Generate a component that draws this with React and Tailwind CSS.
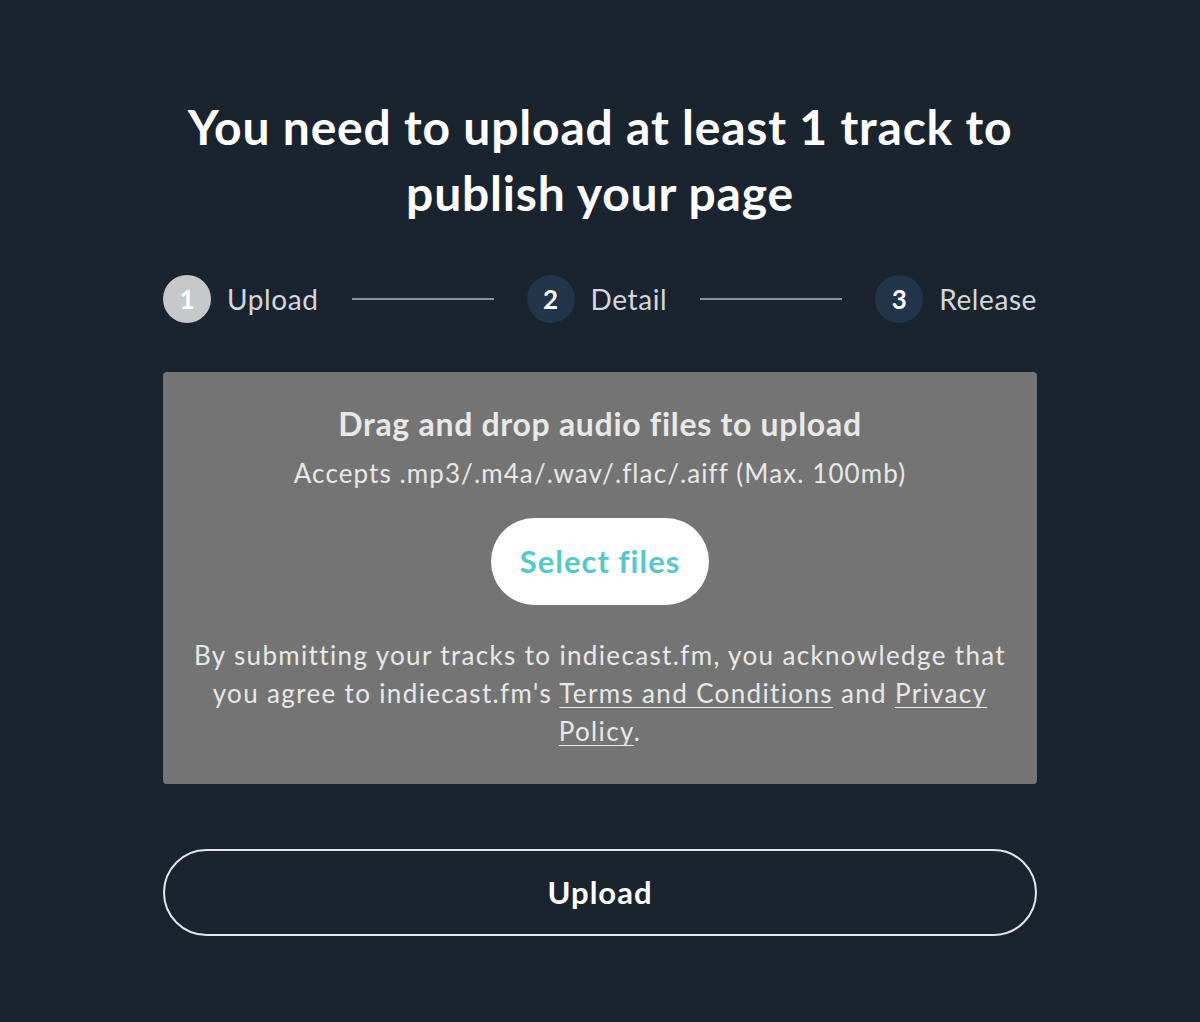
import React from "react";

function Step({ n, label, active }) {
  return (
    <div className="flex items-center gap-[16px] shrink-0">
      <div
        className={
          "w-12 h-12 rounded-full flex items-center justify-center text-[26px] font-bold text-white " +
          (active ? "bg-[#c6c8ca]" : "bg-[#22354a]")
        }
      >
        {n}
      </div>
      <span className="text-[28px] tracking-[0.6px] text-[#d4d8dc]">{label}</span>
    </div>
  );
}

export default function App() {
  return (
    <div
      className="min-h-[1022px] w-full bg-[#19242f] flex flex-col items-center [font-variant-ligatures:none]"
      style={{ fontFamily: "Lato, 'Noto Sans', sans-serif" }}
    >
      <div className="w-[874px] flex flex-col">
        <h1 className="mt-[94px] text-center text-white font-bold text-[48px] tracking-[0.8px] leading-[66px] px-2">
          You need to upload at least 1 track to publish your page
        </h1>

        <div className="mt-[49px] flex items-center">
          <Step n="1" label="Upload" active />
          <div className="flex-1 h-[2px] bg-[#8b929a] mx-[33px]" />
          <Step n="2" label="Detail" />
          <div className="flex-1 h-[2px] bg-[#8b929a] mx-[33px]" />
          <Step n="3" label="Release" />
        </div>

        <div className="mt-[49px] bg-[#747474] rounded-[4px] h-[412px] flex flex-col items-center pt-[28px] px-6">
          <div className="text-[32px] tracking-[0.7px] font-bold text-[#e8e8e8] leading-[48px]">
            Drag and drop audio files to upload
          </div>
          <div className="text-[26px] tracking-[1.1px] text-[#e8e8e8] leading-[36px] mt-[7px]">
            Accepts .mp3/.m4a/.wav/.flac/.aiff (Max. 100mb)
          </div>
          <button className="mt-[27px] w-[218px] h-[87px] rounded-full bg-white text-[#55c8cb] text-[31px] tracking-[1px] font-bold">
            Select files
          </button>
          <p className="mt-[31px] text-center text-[26px] tracking-[1.35px] leading-[38px] text-[#e8e8e8]">
            By submitting your tracks to indiecast.fm, you acknowledge that you agree to indiecast.fm's{" "}
            <span className="underline underline-offset-4 decoration-1">Terms and Conditions</span> and{" "}
            <span className="underline underline-offset-4 decoration-1">Privacy Policy</span>.
          </p>
        </div>

        <button className="mt-[65px] h-[87px] rounded-full border-2 border-[#e6e6e6] text-white text-[31px] tracking-[1px] font-bold">
          Upload
        </button>
      </div>
    </div>
  );
}
